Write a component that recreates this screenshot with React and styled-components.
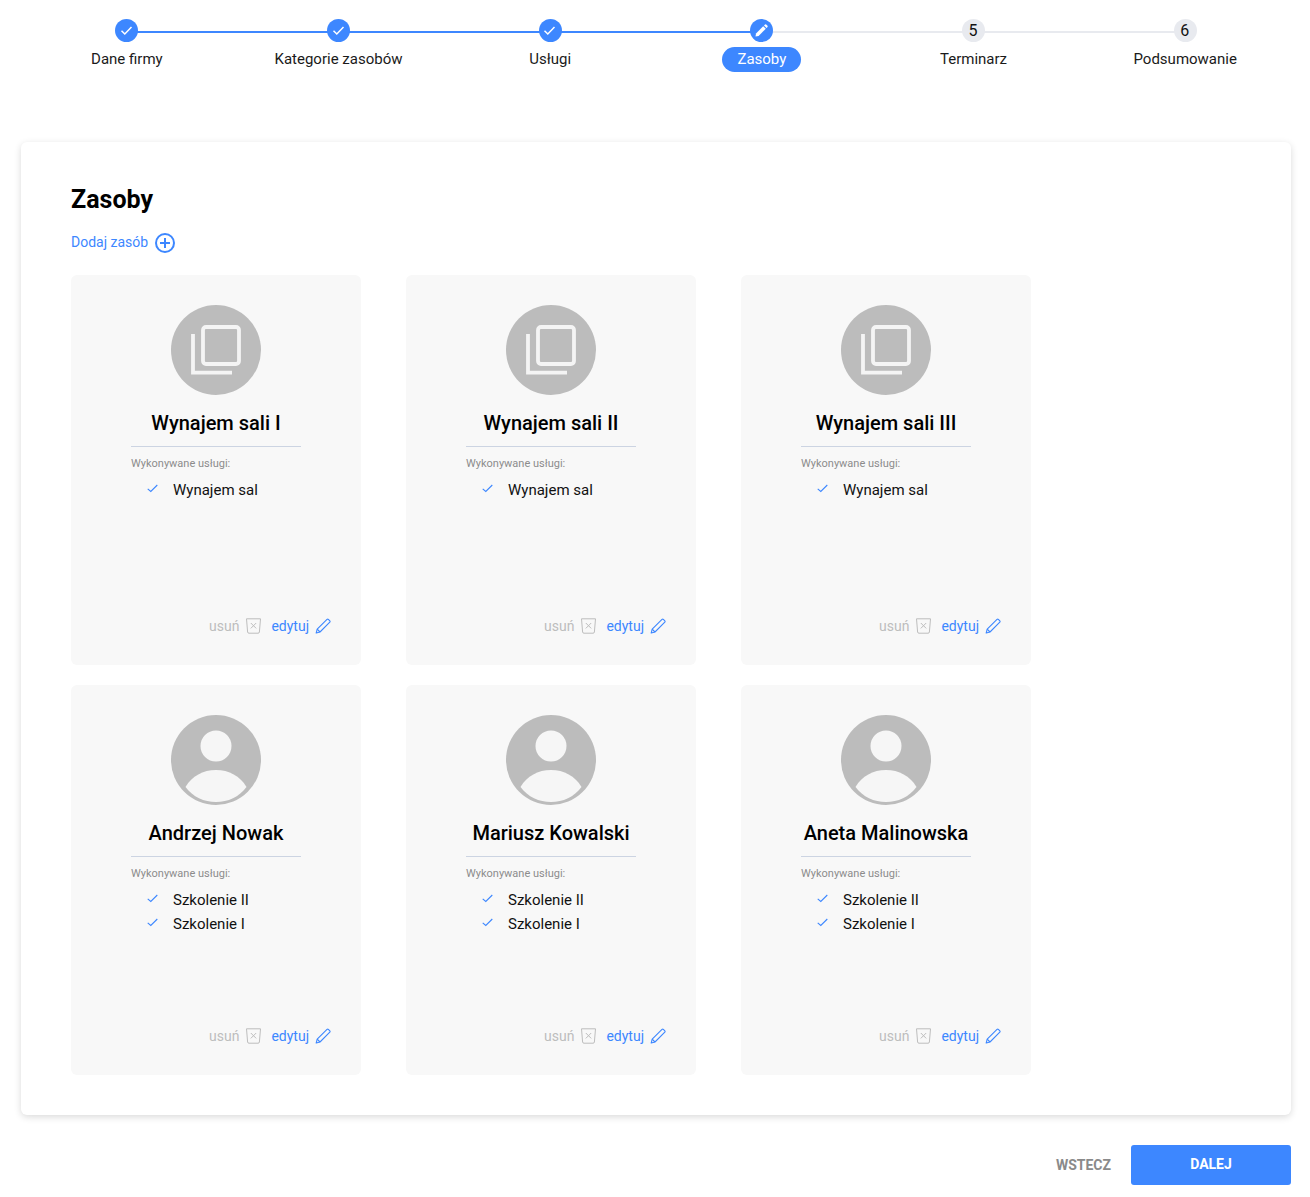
import styled, { createGlobalStyle } from 'styled-components';

const blue = '#3d87ff';

const Global = createGlobalStyle`
  html, body { margin: 0; padding: 0; background: #fff; }
  body { font-family: Roboto, "Liberation Sans", sans-serif; color: #000; }
  * { box-sizing: border-box; }
`;

const Page = styled.div`
  width: 1310px;
  height: 1197px;
  padding: 19px 19px 0 21px;
  overflow: hidden;
`;

const Stepper = styled.div`
  display: flex;
  height: 123px;
`;

const Step = styled.div`
  position: relative;
  flex: 1;
  display: flex;
  flex-direction: column;
  align-items: center;

  &:not(:last-child)::before {
    content: '';
    position: absolute;
    left: 50%;
    width: 100%;
    top: 12px;
    height: 2px;
    background: ${(p) => (p.$done ? blue : '#e8eaef')};
  }
`;

const Dot = styled.div`
  position: relative;
  width: 23px;
  height: 23px;
  padding-right: 1px;
  border-radius: 50%;
  display: flex;
  align-items: center;
  justify-content: center;
  font-size: 16px;
  line-height: 19px;
  color: #111;
  background: ${(p) => (p.$active ? blue : '#e8eaef')};
`;

const StepLabel = styled.div`
  margin-top: 5px;
  height: 25px;
  padding: 0 15px;
  border-radius: 13px;
  font-size: 15px;
  line-height: 25px;
  white-space: nowrap;
  color: ${(p) => (p.$current ? '#fff' : '#1a1a1a')};
  background: ${(p) => (p.$current ? blue : 'transparent')};
`;

const Panel = styled.div`
  width: 1270px;
  height: 973px;
  padding: 42px 50px 0;
  background: #fff;
  border-radius: 6px;
  box-shadow: 0 2px 7px rgba(0, 0, 0, 0.15);
`;

const Title = styled.h1`
  margin: 0;
  font-size: 25px;
  line-height: 32px;
  font-weight: 700;
`;

const AddLink = styled.a`
  display: flex;
  align-items: center;
  gap: 7px;
  margin-top: 16px;
  height: 20px;
  font-size: 14px;
  color: ${blue};
`;

const Grid = styled.div`
  display: grid;
  grid-template-columns: repeat(3, 290px);
  column-gap: 45px;
  row-gap: 20px;
  margin-top: 23px;
`;

const Card = styled.div`
  height: 390px;
  padding: 30px 60px 0;
  background: #f8f8f8;
  border-radius: 6px;
  display: flex;
  flex-direction: column;
`;

const Avatar = styled.div`
  width: 90px;
  height: 90px;
  flex: none;
  align-self: center;
  border-radius: 50%;
  background: #bcbcbc;
  overflow: hidden;
  display: flex;
  align-items: center;
  justify-content: center;
`;

const Name = styled.div`
  margin-top: 15px;
  padding-bottom: 10px;
  border-bottom: 1px solid #ccd4e2;
  text-align: center;
  font-size: 20px;
  line-height: 26px;
  font-weight: 500;
  white-space: nowrap;
`;

const Caption = styled.div`
  margin-top: 10px;
  font-size: 11px;
  line-height: 14px;
  color: #8c8c8c;
`;

const Services = styled.ul`
  list-style: none;
  margin: 7px 0 0;
  padding: 0 0 0 16px;
  flex: 1;
`;

const Service = styled.li`
  display: flex;
  align-items: center;
  gap: 15px;
  height: 24px;
  font-size: 15px;
  color: #111;
`;

const Actions = styled.div`
  display: flex;
  justify-content: flex-end;
  align-items: center;
  margin: 0 -30px 29px 0;
  height: 20px;
  font-size: 14px;
`;

const Remove = styled.span`
  display: flex;
  align-items: center;
  gap: 7px;
  color: #bdbdbd;
`;

const Edit = styled.span`
  display: flex;
  align-items: center;
  gap: 6px;
  margin-left: 10px;
  color: ${blue};
`;

const Footer = styled.div`
  display: flex;
  justify-content: flex-end;
  align-items: center;
  margin-top: 30px;
`;

const BackButton = styled.button`
  border: 0;
  background: none;
  padding: 0;
  margin-right: 20px;
  font: 700 14px Roboto, sans-serif;
  line-height: 38px;
  color: #8a8a8a;
`;

const NextButton = styled.button`
  width: 160px;
  height: 40px;
  border: 0;
  padding: 0 0 2px;
  border-radius: 3px;
  background: ${blue};
  font: 700 14px Roboto, sans-serif;
  color: #fff;
`;

const CheckIcon = () => (
  <svg width="13" height="11" viewBox="0 0 13 11" fill="none">
    <path d="M1.5 5.8 L4.8 9 L11.5 2" stroke="#fff" strokeWidth="1.5" />
  </svg>
);

const PencilDot = () => (
  <svg width="13" height="13" viewBox="0 0 13 13" fill="#fff">
    <path d="M0.5 12.5 L1 9.4 L8.2 2.2 L10.8 4.8 L3.6 12 Z" />
    <path d="M9 1.4 L10 0.5 Q10.6 0 11.2 0.5 L12.5 1.8 Q13 2.4 12.5 3 L11.6 4 Z" />
  </svg>
);

const PlusIcon = () => (
  <svg width="20" height="22" viewBox="0 0 20 22" fill="none" stroke={blue} strokeWidth="2">
    <circle cx="10" cy="12" r="9" />
    <path d="M10 7 V17 M5 12 H15" />
  </svg>
);

const ResourceIcon = () => (
  <svg width="90" height="90" viewBox="0 0 90 90" fill="none" stroke="#f4f4f4" strokeWidth="3.8">
    <rect x="32" y="22" width="36" height="37" rx="3" />
    <path d="M22 29 V67.7 H61" />
  </svg>
);

const PersonIcon = () => (
  <svg width="90" height="90" viewBox="0 0 90 90" fill="#f6f6f6">
    <circle cx="45" cy="31" r="15.5" />
    <path d="M14.5 72 C21 61 32 55 45 55 C58 55 69 61 75.5 72 C68 82 57 87 45 87 C33 87 22 82 14.5 72 Z" />
  </svg>
);

const TickIcon = () => (
  <svg width="11" height="12" viewBox="0 0 11 12" fill="none">
    <path d="M0.7 4.8 L3.8 7.5 L10.3 1" stroke={blue} strokeWidth="1.1" />
  </svg>
);

const TrashIcon = () => (
  <svg width="15" height="16" viewBox="0 0 15 16" fill="none" stroke="#bdbdbd" strokeWidth="1">
    <path d="M0.5 0.8 H14.5 L13.4 14 Q13.3 15.2 12 15.2 H3 Q1.7 15.2 1.6 14 Z" />
    <path d="M4.8 5 L10.2 10.4 M10.2 5 L4.8 10.4" />
  </svg>
);

const EditIcon = () => (
  <svg width="16" height="16" viewBox="0 0 16 16" fill="none" stroke={blue} strokeWidth="1.1" strokeLinejoin="round">
    <path d="M1.2 15 L2.2 11.2 L12 1.4 Q12.7 0.8 13.4 1.4 L14.8 2.8 Q15.4 3.5 14.8 4.2 L5 14 Z" />
    <path d="M2.2 11.2 L5 14" />
  </svg>
);

const steps = [
  { label: 'Dane firmy', done: true },
  { label: 'Kategorie zasobów', done: true },
  { label: 'Usługi', done: true },
  { label: 'Zasoby', current: true },
  { label: 'Terminarz', number: 5 },
  { label: 'Podsumowanie', number: 6 },
];

const resources = [
  { name: 'Wynajem sali I', icon: 'room', services: ['Wynajem sal'] },
  { name: 'Wynajem sali II', icon: 'room', services: ['Wynajem sal'] },
  { name: 'Wynajem sali III', icon: 'room', services: ['Wynajem sal'] },
  { name: 'Andrzej Nowak', icon: 'person', services: ['Szkolenie II', 'Szkolenie I'] },
  { name: 'Mariusz Kowalski', icon: 'person', services: ['Szkolenie II', 'Szkolenie I'] },
  { name: 'Aneta Malinowska', icon: 'person', services: ['Szkolenie II', 'Szkolenie I'] },
];

const App = () => (
  <Page>
    <Global />
    <Stepper>
      {steps.map((s) => (
        <Step key={s.label} $done={s.done}>
          <Dot $active={s.done || s.current}>
            {s.done && <CheckIcon />}
            {s.current && <PencilDot />}
            {s.number}
          </Dot>
          <StepLabel $current={s.current}>{s.label}</StepLabel>
        </Step>
      ))}
    </Stepper>
    <Panel>
      <Title>Zasoby</Title>
      <AddLink>
        Dodaj zasób <PlusIcon />
      </AddLink>
      <Grid>
        {resources.map((r) => (
          <Card key={r.name}>
            <Avatar>{r.icon === 'room' ? <ResourceIcon /> : <PersonIcon />}</Avatar>
            <Name>{r.name}</Name>
            <Caption>Wykonywane usługi:</Caption>
            <Services>
              {r.services.map((s) => (
                <Service key={s}>
                  <TickIcon />
                  {s}
                </Service>
              ))}
            </Services>
            <Actions>
              <Remove>
                usuń <TrashIcon />
              </Remove>
              <Edit>
                edytuj <EditIcon />
              </Edit>
            </Actions>
          </Card>
        ))}
      </Grid>
    </Panel>
    <Footer>
      <BackButton>WSTECZ</BackButton>
      <NextButton>DALEJ</NextButton>
    </Footer>
  </Page>
);

export default App;
